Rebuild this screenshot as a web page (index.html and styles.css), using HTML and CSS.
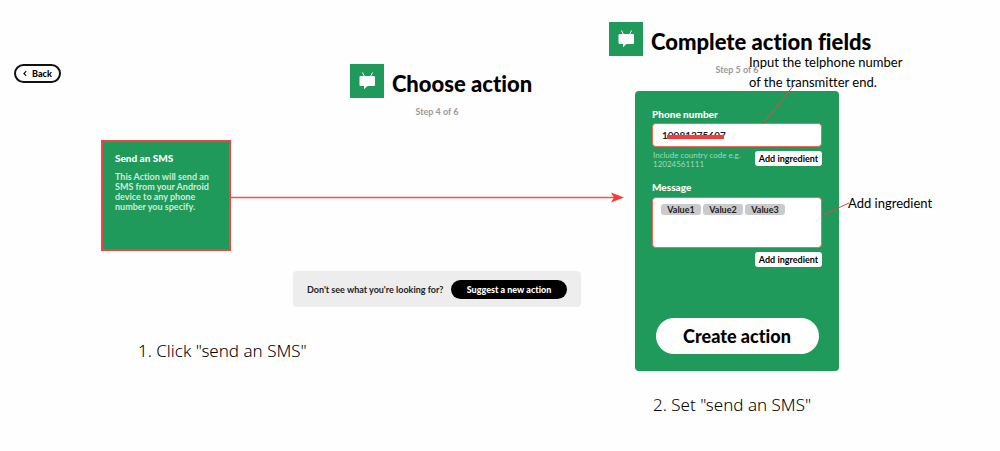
FILE: index.html
```html
<!DOCTYPE html>
<html lang="en">
<head>
<meta charset="utf-8">
<meta name="viewport" content="width=device-width, initial-scale=1">
<title>Send an SMS action</title>
<link rel="stylesheet" href="styles.css">
</head>
<body>
<main class="guide">
  <section class="choose">
    <header class="choose-header">
      <button class="back" type="button">
        <svg class="chevron" viewBox="0 0 5 8" aria-hidden="true"><path d="M4 1 1.2 4 4 7"/></svg>
        Back
      </button>
      <div class="heading">
        <div class="title-row">
          <svg class="logo" viewBox="0 0 34 34" aria-hidden="true"><path class="logo-bg" d="M0 0h34v34H0z"/><path class="logo-antenna" d="m12.500 8.500 2 4m8-4-2 4"/><path class="logo-body" d="M10.500 12h13.500q1 0 1 1v8q0 1-1 1h-6.500l-3.500 3.200V22h-3.500q-1 0-1-1v-8q0-1 1-1z"/></svg>
          <h1 class="title">Choose action</h1>
        </div>
        <p class="step">Step 4 of 6</p>
      </div>
    </header>
    <a class="action-card" href="#fields">
      <strong class="action-name">Send an SMS</strong>
      <span class="action-text">This Action will send an SMS from your Android device to any phone number you specify.</span>
    </a>
    <div class="suggest">
      <span>Don't see what you're looking for?</span>
      <button class="suggest-button" type="button">Suggest a new action</button>
    </div>
    <p class="caption caption-click">1. Click "send an SMS"</p>
  </section>

  <section class="fields" id="fields">
    <div class="heading">
      <div class="title-row">
        <svg class="logo" viewBox="0 0 34 34" aria-hidden="true"><path class="logo-bg" d="M0 0h34v34H0z"/><path class="logo-antenna" d="m12.500 8.500 2 4m8-4-2 4"/><path class="logo-body" d="M10.500 12h13.500q1 0 1 1v8q0 1-1 1h-6.500l-3.500 3.200V22h-3.500q-1 0-1-1v-8q0-1 1-1z"/></svg>
        <h1 class="title">Complete action fields</h1>
      </div>
      <p class="step">Step 5 of 6</p>
    </div>
    <form class="form">
      <label class="label" for="phone">Phone number</label>
      <div class="phone-box">
        <input class="phone" id="phone" type="text" value="10081275607">
        <span class="redaction"></span>
      </div>
      <div class="below">
        <p class="hint">Include country code e.g. 12024561111</p>
        <button class="ingredient" type="button">Add ingredient</button>
      </div>
      <span class="label" id="message-label">Message</span>
      <div class="message" role="textbox" aria-labelledby="message-label" contenteditable="true" spellcheck="false"><span class="chip">Value1</span><span class="chip">Value2</span><span class="chip">Value3</span></div>
      <div class="below below-end">
        <button class="ingredient" type="button">Add ingredient</button>
      </div>
      <button class="create" type="button">Create action</button>
    </form>
    <p class="caption caption-set">2. Set "send an SMS"</p>
  </section>

  <svg class="pointers" width="1000" height="451" viewBox="0 0 1000 451" aria-hidden="true">
    <path class="arrow-line" d="M231 197.500H616"/>
    <path class="arrow-head" d="m624 197.500-13-5 3 5-3 5z"/>
    <path class="pointer" d="M794 85 763 124M823 215l26-12"/>
  </svg>
  <p class="note note-phone">Input the telphone number<br>of the transmitter end.</p>
  <p class="note note-message">Add ingredient</p>
</main>
</body>
</html>
```
FILE: styles.css
```css
* {
  box-sizing: border-box;
}

body {
  margin: 0;
  background: #fefefe;
  color: #000;
  font-family: Lato, "Liberation Sans", sans-serif;
  font-size: 9px;
  line-height: 11px;
  font-variant-ligatures: none;
}

p,
h1 {
  margin: 0;
}

button,
input {
  font: inherit;
  font-variant-ligatures: none;
  font-weight: 900;
  color: inherit;
}

.guide {
  position: relative;
  display: grid;
  grid-template-columns: 609fr 391fr;
}

.choose {
  display: flex;
  flex-direction: column;
  align-items: flex-start;
  padding-top: 64px;
}

.choose-header {
  display: flex;
  align-items: flex-start;
  align-self: stretch;
  gap: 204px;
  padding-left: 14px;
}

.back {
  display: flex;
  align-items: center;
  justify-content: center;
  gap: 5px;
  width: 47px;
  height: 19px;
  padding: 0;
  border: 2px solid #111;
  border-radius: 10px;
  background: #fff;
}

.chevron {
  width: 4px;
  height: 7px;
  fill: none;
  stroke: #111;
  stroke-width: 1.5;
}

.heading {
  flex: 1;
  display: flex;
  flex-direction: column;
  align-items: center;
}

.choose .title-row {
  padding-left: 8px;
}

.title-row {
  display: flex;
  align-items: center;
  gap: 8px;
}

.logo {
  flex: none;
  width: 34px;
  height: 34px;
}

.logo-bg {
  fill: #1f9a5b;
}

.logo-body {
  fill: #fff;
}

.logo-antenna {
  fill: none;
  stroke: #fff;
}

.title {
  padding-top: 6px;
  font-size: 22px;
  line-height: 28px;
  font-weight: 900;
  white-space: nowrap;
}

.step {
  margin-top: 8px;
  color: #999;
  font-weight: 700;
}

.action-card {
  display: flex;
  flex-direction: column;
  gap: 8px;
  width: 130px;
  min-height: 111px;
  margin: 23px 0 0 101px;
  padding: 11px 16px 12px 12px;
  border: 2px solid #f04444;
  background: #1f9a5b;
  color: #fff;
  text-decoration: none;
}

.action-name {
  font-size: 10px;
  font-weight: 900;
}

.action-text {
  color: #d0ebdc;
  font-weight: 700;
  line-height: 10px;
}

.suggest {
  display: flex;
  align-items: center;
  align-self: flex-end;
  justify-content: space-between;
  width: 288px;
  min-height: 36px;
  margin: 20px 28px 0 0;
  padding: 8px 14px;
  border-radius: 4px;
  background: #ededed;
  color: #222;
  font-weight: 700;
}

.suggest-button {
  width: 116px;
  height: 19px;
  padding: 0;
  border: 0;
  border-radius: 10px;
  background: #000;
  color: #fff;
}

.caption {
  font-family: "Noto Sans", sans-serif;
  font-size: 17px;
  line-height: 24px;
  font-weight: 300;
}

.caption-click {
  margin: 32px 0 0 138px;
}

.fields {
  display: flex;
  flex-direction: column;
  align-items: flex-start;
  padding-top: 22px;
}

.fields .heading {
  flex: none;
  width: 256px;
}

.fields .title-row {
  align-self: flex-start;
}

.form {
  display: flex;
  flex-direction: column;
  width: 204px;
  min-height: 280px;
  margin: 16px 0 0 26px;
  padding: 18px 17px 17px;
  border-radius: 4px;
  background: #1f9a5b;
}

.label {
  color: #fff;
  font-size: 10px;
  font-weight: 900;
}

.phone-box {
  position: relative;
  margin-top: 3px;
}

.phone {
  display: block;
  width: 100%;
  height: 24px;
  padding: 0 9px;
  border: 1px solid #ec6a5c;
  border-radius: 4px;
  background: #fff;
  color: #222;
  font-size: 10px;
  font-weight: 700;
}

.redaction {
  position: absolute;
  left: 15px;
  top: 12px;
  width: 57px;
  height: 4px;
  background: #fb3939;
}

.below {
  display: flex;
  justify-content: space-between;
  align-items: flex-start;
  min-height: 35px;
  padding-top: 4px;
}

.below-end {
  justify-content: flex-end;
}

.hint {
  width: 96px;
  padding-left: 1px;
  color: #a5d7bd;
  font-size: 8px;
  line-height: 9px;
}

.ingredient {
  width: 67px;
  height: 15px;
  padding: 0;
  border: 0;
  border-radius: 3px;
  background: #fff;
  font-weight: 700;
  white-space: nowrap;
}

.message {
  display: flex;
  align-items: flex-start;
  gap: 2px;
  min-height: 51px;
  margin-top: 4px;
  padding: 6px 8px;
  border: 1px solid #ec6a5c;
  border-radius: 4px;
  background: #fff;
  color: #222;
}

.chip {
  width: 40px;
  border-radius: 3px;
  background: #cacaca;
  font-weight: 700;
  text-align: center;
}

.create {
  width: 163px;
  height: 36px;
  margin-top: auto;
  align-self: center;
  padding: 0;
  border: 0;
  border-radius: 18px;
  background: #fff;
  font-size: 18px;
}

.caption-set {
  margin: 22px 0 0 44px;
}

.pointers {
  position: absolute;
  left: 0;
  top: 0;
  pointer-events: none;
}

.arrow-line {
  stroke: #f65050;
  stroke-width: 1.5;
}

.arrow-head {
  fill: #fb3939;
}

.pointer {
  fill: none;
  stroke: #ee4343;
}

.note {
  position: absolute;
  font-size: 13px;
  line-height: 20px;
  white-space: nowrap;
}

.note-phone {
  left: 749px;
  top: 52px;
}

.note-message {
  left: 848px;
  top: 193px;
}
```
